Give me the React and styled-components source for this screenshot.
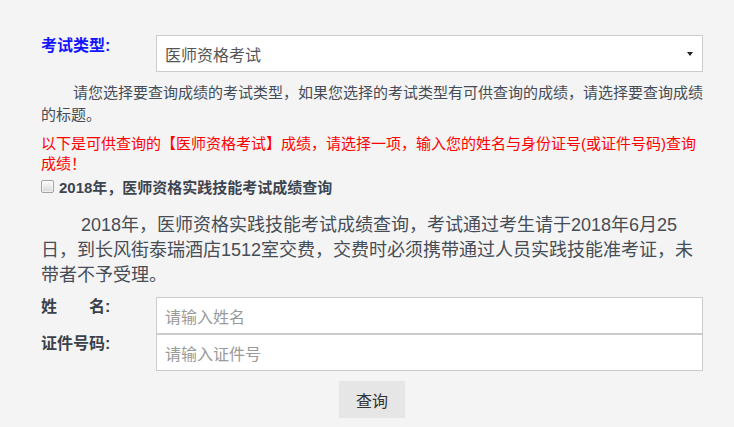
import React from "react";
import styled, { createGlobalStyle } from "styled-components";

const Global = createGlobalStyle`
  html, body { margin: 0; padding: 0; background: #f4f4f4; }
  body { font-family: "Liberation Sans", "Noto Sans CJK SC", sans-serif; }
  * { box-sizing: border-box; }
`;

const Page = styled.div`
  width: 662px;
  margin-left: 41px;
  padding-top: 35px;
  padding-bottom: 8px;
`;

const FieldRow = styled.div`
  display: flex;
  align-items: flex-start;
`;

const Label = styled.label`
  width: 115px;
  flex: none;
  padding-top: ${(p) => p.$pt || 0}px;
  font-size: 16px;
  line-height: 20px;
  font-weight: bold;
  color: ${(p) => p.$color || "#3a414b"};
  white-space: pre;
`;

const SelectWrap = styled.div`
  position: relative;
  flex: 1;
`;

const Select = styled.select`
  display: block;
  width: 100%;
  height: 37px;
  appearance: none;
  -webkit-appearance: none;
  border: 1px solid #cccccc;
  border-radius: 0;
  background: #ffffff;
  padding: 0 24px 0 8px;
  font-family: "Noto Sans CJK SC", sans-serif;
  font-size: 16px;
  color: #555555;
  outline: none;
`;

const Caret = styled.span`
  position: absolute;
  right: 10px;
  top: 17px;
  width: 0;
  height: 0;
  border-left: 3px solid transparent;
  border-right: 3px solid transparent;
  border-top: 4px solid #222222;
  pointer-events: none;
`;

const Intro = styled.p`
  margin: 10px -2px 0 0;
  font-size: 15px;
  line-height: 21.5px;
  text-indent: 32px;
  color: #444c57;
`;

const Notice = styled.p`
  margin: 9px 0 0;
  font-size: 15px;
  line-height: 20px;
  color: #ff0000;
`;

const CheckRow = styled.label`
  display: flex;
  align-items: center;
  gap: 5px;
  margin-top: 2px;
  height: 20px;
  font-size: 15px;
  font-weight: bold;
  color: #3c4550;
`;

const Check = styled.input`
  appearance: none;
  -webkit-appearance: none;
  width: 13px;
  height: 13px;
  margin: 0;
  flex: none;
  border: 1px solid #a3a3a3;
  border-radius: 2px;
  background: linear-gradient(#fbfbfb, #d8d8d8);
  box-shadow: inset 0 0 0 1px rgba(255, 255, 255, 0.6);
`;

const Detail = styled.p`
  margin: 17px 0 0;
  font-size: 18px;
  line-height: 25px;
  text-indent: 40px;
  color: #464d57;
`;

const TextInput = styled.input`
  flex: 1;
  display: block;
  height: 37px;
  margin: 0;
  border: 1px solid #cccccc;
  border-radius: 0;
  background: #ffffff;
  padding: 0 8px;
  font-family: "Noto Sans CJK SC", sans-serif;
  font-size: 16px;
  color: #555555;
  outline: none;
  &::placeholder {
    color: #9a9a9a;
  }
`;

const Form = styled.div`
  margin-top: 9px;
`;

const SubmitButton = styled.button`
  display: block;
  width: 66px;
  height: 37px;
  margin: 10px auto 0;
  border: none;
  border-radius: 0;
  background: #e6e6e6;
  font-family: "Noto Sans CJK SC", sans-serif;
  font-size: 16px;
  color: #333333;
  padding: 0;
`;

export default function App() {
  return (
    <>
      <Global />
      <Page>
        <FieldRow>
          <Label $color="#1414ff" $pt={1}>考试类型:</Label>
          <SelectWrap>
            <Select defaultValue="yszg">
              <option value="yszg">医师资格考试</option>
            </Select>
            <Caret />
          </SelectWrap>
        </FieldRow>
        <Intro>
          请您选择要查询成绩的考试类型，如果您选择的考试类型有可供查询的成绩，请选择要查询成绩的标题。
        </Intro>
        <Notice>
          以下是可供查询的【医师资格考试】成绩，请选择一项，输入您的姓名与身份证号(或证件号码)查询成绩！
        </Notice>
        <CheckRow>
          <Check type="checkbox" />
          <span>2018年，医师资格实践技能考试成绩查询</span>
        </CheckRow>
        <Detail>
          2018年，医师资格实践技能考试成绩查询，考试通过考生请于2018年6月25日，到长风街泰瑞酒店1512室交费，交费时必须携带通过人员实践技能准考证，未带者不予受理。
        </Detail>
        <Form>
          <FieldRow>
            <Label>{"姓　　名:"}</Label>
            <TextInput placeholder="请输入姓名" />
          </FieldRow>
          <FieldRow>
            <Label>证件号码:</Label>
            <TextInput placeholder="请输入证件号" />
          </FieldRow>
          <SubmitButton type="button">查询</SubmitButton>
        </Form>
      </Page>
    </>
  );
}
